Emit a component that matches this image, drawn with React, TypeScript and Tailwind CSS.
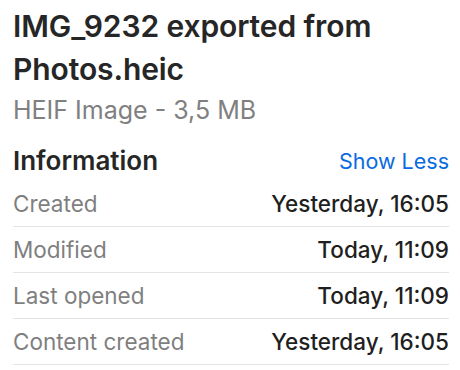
const rows = [
  { label: 'Created', value: 'Yesterday, 16:05' },
  { label: 'Modified', value: 'Today, 11:09' },
  { label: 'Last opened', value: 'Today, 11:09' },
  { label: 'Content created', value: 'Yesterday, 16:05' },
]

export default function App() {
  return (
    <div className="w-[460px] h-[370px] bg-white pl-[13px] pr-[11px] pt-[5px] overflow-hidden" style={{ fontFamily: 'Inter, "Noto Sans", sans-serif' }}>
      <h1 className="text-[30px] leading-[43px] font-semibold text-[#262626] tracking-[-0.1px]">IMG_9232 exported from Photos.heic</h1>
      <p className="text-[25px] leading-[30px] mt-[4px] text-[#808080]">HEIF Image - 3,5 MB</p>
      <div className="flex items-center justify-between h-[41px] mt-[15px]">
        <h2 className="text-[26px] font-semibold text-[#262626]">Information</h2>
        <button className="text-[21.5px] text-[#0a6be0] mt-[2px]">Show Less</button>
      </div>
      <ul>
        {rows.map((r) => (
          <li key={r.label} className="flex items-center justify-between h-[46px] border-b border-[#e3e3e3]">
            <span className="text-[22.5px] text-[#7f7f7f]">{r.label}</span>
            <span className="text-[22.5px] font-medium text-[#1f1f1f]">{r.value}</span>
          </li>
        ))}
      </ul>
    </div>
  )
}
